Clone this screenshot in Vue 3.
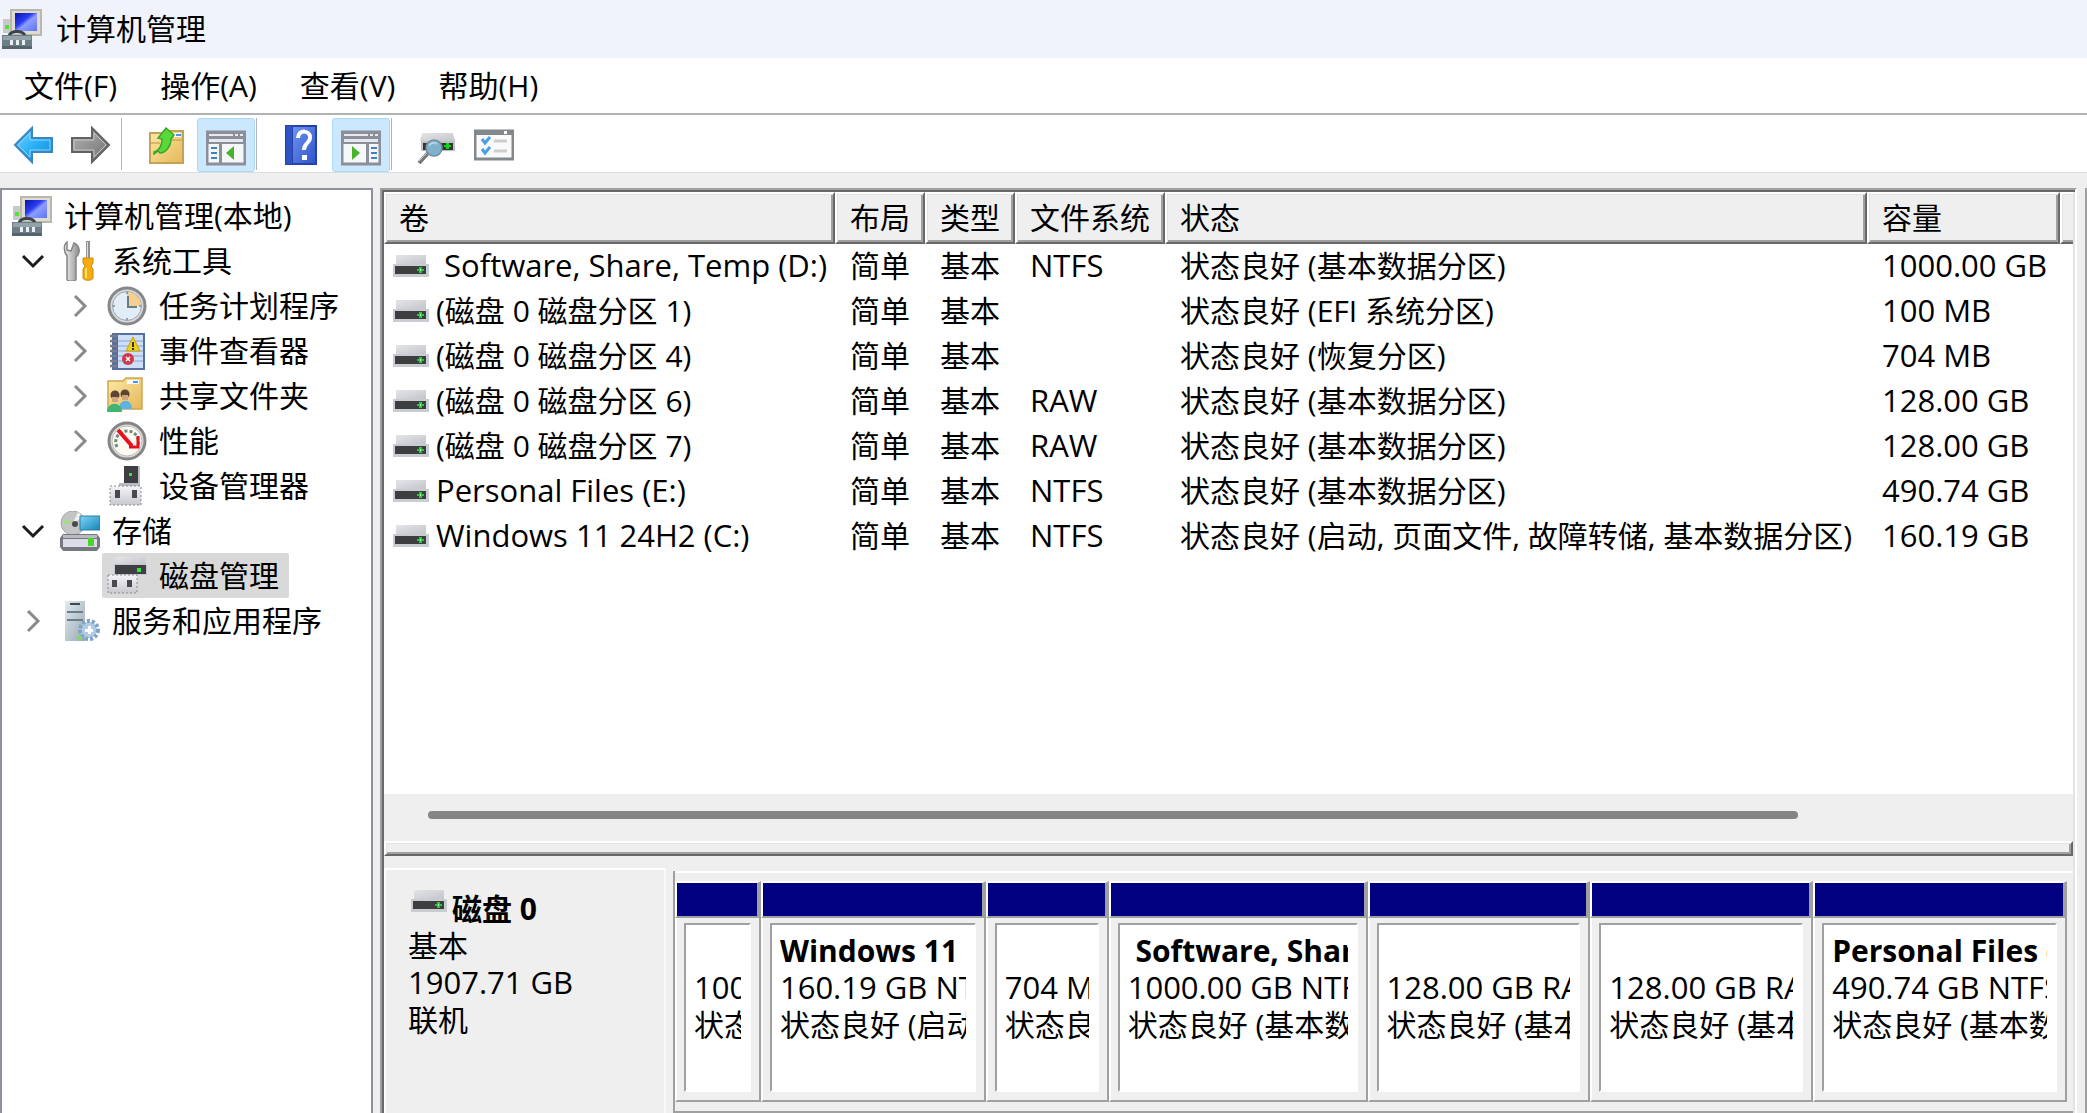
<script setup>
const menus = ['文件(F)', '操作(A)', '查看(V)', '帮助(H)']

const tools = [
  { icon: 'back', label: '后退' },
  { icon: 'forward', label: '前进', sep: true },
  { icon: 'folder-up', label: '上一级' },
  { icon: 'pane-left', label: '显示/隐藏控制台树', on: true, sep: true },
  { icon: 'help', label: '帮助' },
  { icon: 'pane-right', label: '显示/隐藏操作窗格', on: true, sep: true },
  { icon: 'rescan', label: '重新扫描磁盘' },
  { icon: 'list', label: '属性' },
]

const tree = [
  { level: 0, icon: 'computer', text: '计算机管理(本地)' },
  { level: 1, icon: 'tools', text: '系统工具', state: 'open' },
  { level: 2, icon: 'clock', text: '任务计划程序', state: 'closed' },
  { level: 2, icon: 'events', text: '事件查看器', state: 'closed' },
  { level: 2, icon: 'share', text: '共享文件夹', state: 'closed' },
  { level: 2, icon: 'gauge', text: '性能', state: 'closed' },
  { level: 2, icon: 'device', text: '设备管理器' },
  { level: 1, icon: 'storage', text: '存储', state: 'open' },
  { level: 2, icon: 'disk-mgmt', text: '磁盘管理', selected: true },
  { level: 1, icon: 'services', text: '服务和应用程序', state: 'closed' },
]

const columns = ['卷', '布局', '类型', '文件系统', '状态', '容量', '']

const volumes = [
  { name: '\u00a0Software, Share, Temp (D:)', latin: true, fs: 'NTFS', status: '状态良好 (基本数据分区)', size: '1000.00 GB' },
  { name: '(磁盘 0 磁盘分区 1)', fs: '', status: '状态良好 (EFI 系统分区)', size: '100 MB' },
  { name: '(磁盘 0 磁盘分区 4)', fs: '', status: '状态良好 (恢复分区)', size: '704 MB' },
  { name: '(磁盘 0 磁盘分区 6)', fs: 'RAW', status: '状态良好 (基本数据分区)', size: '128.00 GB' },
  { name: '(磁盘 0 磁盘分区 7)', fs: 'RAW', status: '状态良好 (基本数据分区)', size: '128.00 GB' },
  { name: 'Personal Files (E:)', latin: true, fs: 'NTFS', status: '状态良好 (基本数据分区)', size: '490.74 GB' },
  { name: 'Windows 11 24H2 (C:)', latin: true, fs: 'NTFS', status: '状态良好 (启动, 页面文件, 故障转储, 基本数据分区)', size: '160.19 GB' },
]

const partitions = [
  { share: 86, name: '', size: '100 MB', status: '状态良好' },
  { share: 225, name: 'Windows 11 24H2', size: '160.19 GB NTFS', status: '状态良好 (启动)' },
  { share: 123, name: '', size: '704 MB', status: '状态良好' },
  { share: 259, name: '\u00a0Software, Share', size: '1000.00 GB NTFS', status: '状态良好 (基本数据)' },
  { share: 223, name: '', size: '128.00 GB RAW', status: '状态良好 (基本)' },
  { share: 223, name: '', size: '128.00 GB RAW', status: '状态良好 (基本)' },
  { share: 254, name: 'Personal Files (E:)', size: '490.74 GB NTFS', status: '状态良好 (基本数据)' },
]
</script>

<template>
  <svg class="sprite" aria-hidden="true">
    <defs>
      <linearGradient id="g-screen" x1="0" y1="0" x2="1" y2="1">
        <stop offset="0" stop-color="#0a12a8" /><stop offset=".4" stop-color="#2a3ef0" />
        <stop offset=".55" stop-color="#8d9dff" /><stop offset="1" stop-color="#5c74f4" />
      </linearGradient>
      <linearGradient id="g-blue" x1="0" y1="0" x2="1" y2="1">
        <stop offset="0" stop-color="#7fd6fb" /><stop offset=".5" stop-color="#29b2f8" /><stop offset="1" stop-color="#1584d0" />
      </linearGradient>
      <linearGradient id="g-gray" x1="0" y1="0" x2="1" y2="1">
        <stop offset="0" stop-color="#b5b5b5" /><stop offset="1" stop-color="#6f6f6f" />
      </linearGradient>
      <linearGradient id="g-folder" x1="0" y1="0" x2="1" y2="1">
        <stop offset="0" stop-color="#ffe9a6" /><stop offset="1" stop-color="#e3b85a" />
      </linearGradient>
      <linearGradient id="g-help" x1="0" y1="0" x2="1" y2="1">
        <stop offset="0" stop-color="#6f93ee" /><stop offset="1" stop-color="#2f55cc" />
      </linearGradient>
      <linearGradient id="g-metal" x1="0" y1="0" x2="1" y2="0">
        <stop offset="0" stop-color="#f4f4f4" /><stop offset="1" stop-color="#8c8c8c" />
      </linearGradient>
      <linearGradient id="g-top" x1="0" y1="0" x2="1" y2="1">
        <stop offset="0" stop-color="#e4e5e8" /><stop offset="1" stop-color="#c3c5ca" />
      </linearGradient>
      <linearGradient id="g-box" x1="0" y1="0" x2="0" y2="1">
        <stop offset="0" stop-color="#f4f4f8" /><stop offset="1" stop-color="#c8c8d0" />
      </linearGradient>
      <linearGradient id="g-cyan" x1="0" y1="0" x2="1" y2="1">
        <stop offset="0" stop-color="#7fd6f5" /><stop offset="1" stop-color="#1583ba" />
      </linearGradient>
      <linearGradient id="g-tower" x1="0" y1="0" x2="1" y2="1">
        <stop offset="0" stop-color="#e3ecf1" /><stop offset="1" stop-color="#98a8b3" />
      </linearGradient>
    </defs>

    <symbol id="computer" viewBox="0 0 40 40">
      <path d="M1 10h8v14H1z" fill="#c7cbc8" /><path d="M3 16h4v4H3z" fill="#52e03a" />
      <path d="M8 0h32v27H8z" fill="#b9b7ae" /><path d="M10 2h28v23H10z" fill="#dedbd0" />
      <path d="M13 4h22v18H13z" fill="url(#g-screen)" />
      <path d="M7 27c2-6 14-6 16 0" fill="none" stroke="#3b444b" stroke-width="3" />
      <path d="M0 26h30v14H0z" fill="#6d7e87" /><path d="M1 27h28v4H1z" fill="#93a3ab" />
      <path d="M8 31h3v5H8zM14 31h3v5h-3zM20 31h3v5h-3z" fill="#e9eef0" />
      <path d="M0 37h30v3H0z" fill="#55646d" />
    </symbol>

    <symbol id="back" viewBox="0 0 40 40">
      <path d="M2 20 19 3v10h20v14H19v10z" fill="url(#g-blue)" stroke="#3a86c4" stroke-width="2" />
      <path d="M5 20 17 8v7h20v10H17v7z" fill="none" stroke="#8fd0f4" stroke-width="1" />
    </symbol>
    <symbol id="forward" viewBox="0 0 40 40">
      <path d="M38 20 21 3v10H1v14h20v10z" fill="url(#g-gray)" stroke="#636363" stroke-width="2" />
      <path d="M35 20 23 8v7H3v10h20v7z" fill="none" stroke="#c4c4c4" stroke-width="1" />
    </symbol>
    <symbol id="folder-up" viewBox="0 0 40 40">
      <path d="M4 8h15v-2h18v32H4z" fill="url(#g-folder)" stroke="#c4a257" stroke-width="2" />
      <path d="M28 8h7v4h-7z" fill="#fff" /><path d="M30 9h5v2h-5z" fill="#3d9be8" />
      <path d="M5 18h9M24 15h12" fill="none" stroke="#cda955" stroke-width="1.500" />
      <path d="M8 27c6-2 8-8 8-13l-4-1 8-10 8 7-3 4c0 8-6 14-11 14l-2-2-4 3z" fill="#58d83a" stroke="#3aa528" stroke-width="1.500" />
    </symbol>
    <symbol id="pane-left" viewBox="0 0 40 40">
      <path d="M1 5h38v32H1z" fill="#f6f7f9" stroke="#8b8f99" stroke-width="3" />
      <path d="M2 6h36v11H2z" fill="#8b8f99" /><path d="M3 7h24v2H3zM3 12h34v3H3z" fill="#e6e9ef" />
      <path d="M29 7h3v2h-3zM34 7h3v2h-3z" fill="#e6e9ef" />
      <path d="M13 17h3v19h-3z" fill="#8b8f99" />
      <path d="M5 20h6v2H5zM5 25h6v2H5zM5 30h6v2H5z" fill="#3f7fc8" />
      <path d="M28 19v14l-8-7z" fill="#45b52c" />
    </symbol>
    <symbol id="pane-right" viewBox="0 0 40 40">
      <path d="M1 5h38v32H1z" fill="#f6f7f9" stroke="#8b8f99" stroke-width="3" />
      <path d="M2 6h36v11H2z" fill="#8b8f99" /><path d="M3 7h24v2H3zM3 12h34v3H3z" fill="#e6e9ef" />
      <path d="M29 7h3v2h-3zM34 7h3v2h-3z" fill="#e6e9ef" />
      <path d="M25 17h3v19h-3z" fill="#8b8f99" />
      <path d="M30 20h6v2h-6zM30 25h6v2h-6zM30 30h6v2h-6z" fill="#3f7fc8" />
      <path d="M11 19v14l8-7z" fill="#45b52c" />
    </symbol>
    <symbol id="help" viewBox="0 0 40 40">
      <path d="M4 0h32v40H4z" fill="#2443a8" /><path d="M12 2h22v36H12z" fill="url(#g-help)" />
      <path d="M5 1h6v38H5z" fill="#2f53c4" />
      <path d="M17 13c0-9 13-8 12 0 0 5-6 5-6 12" fill="none" stroke="#fff" stroke-width="4" />
      <path d="M21 30h5v5h-5z" fill="#fff" />
    </symbol>
    <symbol id="rescan" viewBox="0 0 40 40">
      <path d="M6 8h31l2 8H4z" fill="url(#g-top)" /><path d="M5 16h34v10H5z" fill="#bfc3c8" />
      <path d="M7 18h30v7H7z" fill="#333" /><path d="M28 20h7v2h-7zM30 18h3v6h-3z" fill="#12d21a" />
      <path d="M13 27 3 38" stroke="#777" stroke-width="4" /><path d="M12 27 3 36" stroke="#c5c5c5" stroke-width="1" />
      <circle cx="18" cy="23" r="8" fill="#7fb1cc" stroke="#6f8c9f" stroke-width="1.500" />
      <path d="M13 21c2-4 6-4 8-2" fill="none" stroke="#b6d4e3" stroke-width="2" />
    </symbol>
    <symbol id="list" viewBox="0 0 40 40">
      <path d="M1 6h38v28H1z" fill="#fafafa" stroke="#83888c" stroke-width="3" /><path d="M1 5h38v5H1z" fill="#83888c" />
      <path d="M30 6h3v3h-3z" fill="#fff" />
      <path d="m8 14 3 4 5-6M8 24l3 4 5-6" fill="none" stroke="#4b9fe8" stroke-width="3" />
      <path d="M20 16h13M20 26h13" stroke="#cdcdcd" stroke-width="3" />
    </symbol>

    <symbol id="tools" viewBox="0 0 40 40">
      <path d="M7 1v8l4 1 3-8c6 3 7 10 2 14v22c0 3-9 3-9 0V15C4 11 3 4 7 1z" fill="url(#g-metal)" stroke="#858585" stroke-width="1.500" />
      <path d="M26 0h4v18h-4z" fill="#8f9193" /><path d="M27 1h1v17h-1z" fill="#ddd" />
      <path d="M23 17h10v5l-2 3 2 3v9c0 3-10 3-10 0v-9l2-3-2-3z" fill="#f7ac0c" stroke="#c58a15" />
      <path d="M26 27v10" stroke="#ffe07a" stroke-width="2" />
    </symbol>
    <symbol id="clock" viewBox="0 0 40 40">
      <circle cx="20" cy="20" r="18" fill="#d7dade" stroke="#858789" stroke-width="3" />
      <circle cx="20" cy="20" r="14.500" fill="#e3edf8" stroke="#9aa3ac" />
      <path d="M20 20V6a14 14 0 0 1 14 14z" fill="#f4d08c" />
      <path d="M21 10v11h9" fill="none" stroke="#6c7b88" stroke-width="2" />
      <path d="M20 6v2M20 32v2M6 20h2M32 20h2" stroke="#7a8a99" stroke-width="1.500" />
    </symbol>
    <symbol id="events" viewBox="0 0 40 40">
      <path d="M5 2h33v37H5z" fill="#556ea6" /><path d="M11 4h25v33H11z" fill="#cfdff5" />
      <path d="M11 10h25M11 15h25M11 20h25M11 25h25M11 30h25" stroke="#83a3d8" />
      <path d="M3 5h7M3 10h7M3 15h7M3 20h7M3 25h7M3 30h7M3 35h7" stroke="#7b7e86" stroke-width="2.500" />
      <path d="m26 6 7 14H19z" fill="#eed01f" stroke="#c8a400" /><path d="M25 11h2v5h-2zM25 17h2v2h-2z" fill="#3d3300" />
      <circle cx="21" cy="28" r="6" fill="#d2384c" /><path d="m19 26 4 4M23 26l-4 4" stroke="#fff" stroke-width="1.500" />
    </symbol>
    <symbol id="share" viewBox="0 0 40 40">
      <path d="M1 5h15l3-3h16v31H1z" fill="url(#g-folder)" stroke="#d0a850" stroke-width="1.500" />
      <path d="M20 4h12v4H20z" fill="#fff" /><path d="M26 5h5v2h-5z" fill="#3d9be8" />
      <circle cx="18" cy="18" r="4.500" fill="#5b4636" /><path d="M15 19h6v5h-6z" fill="#d3a480" /><path d="M12 33c0-11 13-11 13 0z" fill="#5fb2e4" />
      <circle cx="8" cy="19" r="4.500" fill="#5b4636" /><path d="M5 21h6v5H5z" fill="#d3a480" /><path d="M0 36c0-11 15-11 15 0z" fill="#3fb475" />
    </symbol>
    <symbol id="gauge" viewBox="0 0 40 40">
      <circle cx="20" cy="20" r="18" fill="#dcdcdc" stroke="#858585" stroke-width="3" />
      <circle cx="20" cy="20" r="15" fill="#fdfaf4" stroke="#c1bdb5" />
      <path d="M10 26c-4-8 2-16 10-16s13 7 11 14" fill="none" stroke="#6b8b7a" stroke-width="3" stroke-dasharray="3 2" />
      <path d="m11 9 14 16" stroke="#e8101c" stroke-width="4" /><path d="M31 15v11h-9" fill="none" stroke="#e8101c" stroke-width="3" />
    </symbol>
    <symbol id="device" viewBox="0 0 40 40">
      <path d="M17 0h14v19H17z" fill="#3e3f42" /><path d="M31 0h2v19h-2zM12 17h21v3H12z" fill="#b9bdc2" /><path d="M22 7h3v3h-3z" fill="#38e34a" />
      <path d="M3 20h31v19H3z" fill="url(#g-box)" stroke="#8a8a90" stroke-dasharray="2 2" />
      <path d="M8 24h5v8H8zM25 24h5v8h-5z" fill="#4a4a4e" />
    </symbol>
    <symbol id="storage" viewBox="0 0 40 40">
      <circle cx="13" cy="12" r="12" fill="#c3c5c6" stroke="#a5a5a5" /><path d="m13 12-8-4-2 5z" fill="#9be37f" />
      <path d="m13 12 5-11 5 5z" fill="#f1f1f1" /><circle cx="15" cy="13" r="3" fill="#4a4a4d" />
      <path d="M20 5h20v14H20z" fill="url(#g-cyan)" stroke="#2b7fa6" />
      <path d="M3 23h34l3 4v9l-3 4H3l-3-4v-9z" fill="#77777f" /><path d="M3 24h34v3H3z" fill="#b9bac2" /><path d="M3 28h34v8H3z" fill="#dcdce8" />
      <path d="M28 27h6v8h-6z" fill="#4bd52a" />
    </symbol>
    <symbol id="disk-mgmt" viewBox="0 0 40 40">
      <path d="M9 1h29l1 8H8z" fill="url(#g-top)" /><path d="M7 8h33v11H7z" fill="#c3c8ce" />
      <path d="M8 9h31v9H8z" fill="#3e3f42" /><path d="M30 12h4v4h-4z" fill="#38e34a" />
      <path d="M1 19h29v18H1z" fill="url(#g-box)" stroke="#8a8a90" stroke-dasharray="2 2" />
      <path d="M5 24h5v7H5zM20 24h5v7h-5z" fill="#4a4a4e" />
    </symbol>
    <symbol id="services" viewBox="0 0 40 40">
      <path d="M5 0h20v40H5z" fill="url(#g-tower)" /><path d="M10 2h10v2H10z" fill="#3e4a52" /><path d="M7 10h16v2H7zM7 18h16v2H7z" fill="#6e7d87" />
      <circle cx="29" cy="29" r="8" fill="#b3cce4" /><circle cx="29" cy="29" r="9" fill="none" stroke="#7ea3c8" stroke-width="4" stroke-dasharray="3 2" />
      <path d="M28 25h3v8h-3z" fill="#fff" /><path d="M25 28h8v3h-8z" fill="#fff" /><path d="M18 35h4v3h-4z" fill="#7be04a" />
    </symbol>
    <symbol id="drive" viewBox="0 0 36 22">
      <path d="M3 0h30v9H3z" fill="url(#g-top)" /><path d="M0 9h36v13H0z" fill="#c9ccd1" />
      <path d="M2 11h31v8H2z" fill="#3d3e40" /><path d="M24 14h7v2h-7z" fill="#28c735" /><path d="M26 12h3v6h-3z" fill="#28c735" /><path d="M27 14h1v2h-1z" fill="#a6ffad" />
    </symbol>
  </svg>

  <div class="window">
    <header class="title">
      <svg class="icon"><use href="#computer" /></svg>
      <h1>计算机管理</h1>
    </header>

    <nav class="menu">
      <button v-for="m in menus" :key="m" type="button">{{ m }}</button>
    </nav>

    <div class="toolbar">
      <template v-for="t in tools" :key="t.icon">
        <button type="button" :class="{ on: t.on }" :aria-label="t.label"><svg class="icon"><use :href="'#' + t.icon" /></svg></button>
        <i v-if="t.sep" class="sep"></i>
      </template>
    </div>

    <main class="body">
      <ul class="tree">
        <li v-for="n in tree" :key="n.text" :class="'level' + n.level">
          <button v-if="n.state" type="button" class="twist" :class="n.state" :aria-label="n.text">
            <svg viewBox="0 0 24 24"><path d="m7 2 10 10L7 22" /></svg>
          </button>
          <span v-else-if="n.level" class="twist"></span>
          <span class="node" :class="{ selected: n.selected }">
            <svg class="icon"><use :href="'#' + n.icon" /></svg>{{ n.text }}
          </span>
        </li>
      </ul>

      <section class="pane">
        <div class="list">
          <table>
            <colgroup>
              <col class="c-name"><col class="c-short"><col class="c-short"><col class="c-fs"><col class="c-status"><col class="c-size"><col>
            </colgroup>
            <thead>
              <tr><th v-for="c in columns" :key="c">{{ c }}</th></tr>
            </thead>
            <tbody>
              <tr v-for="v in volumes" :key="v.name">
                <td>
                  <span class="volume" :class="{ latin: v.latin }"><svg class="drive"><use href="#drive" /></svg>{{ v.name }}</span>
                </td>
                <td>简单</td>
                <td>基本</td>
                <td class="latin">{{ v.fs }}</td>
                <td>{{ v.status }}</td>
                <td class="latin">{{ v.size }}</td>
                <td></td>
              </tr>
            </tbody>
          </table>
        </div>

        <div class="scroll"><div class="thumb"></div></div>
        <div class="splitter"></div>

        <div class="disks">
          <div class="disk">
            <h2><svg class="drive"><use href="#drive" /></svg>磁盘 0</h2>
            <p>基本</p>
            <p class="latin">1907.71 GB</p>
            <p>联机</p>
          </div>
          <div class="map">
            <div class="parts">
              <div v-for="(p, i) in partitions" :key="i" class="part" :style="{ flexGrow: p.share }">
                <div class="bar"></div>
                <div class="cell">
                  <div class="box">
                    <strong>{{ p.name }}</strong>
                    <p class="latin">{{ p.size }}</p>
                    <p>{{ p.status }}</p>
                  </div>
                </div>
              </div>
            </div>
          </div>
        </div>
      </section>
      <div class="edge"></div>
    </main>
  </div>
</template>

<style>
body {
  margin: 0;
  background: #efefef;
}
</style>

<style scoped>
.sprite {
  position: absolute;
  width: 0;
  height: 0;
}
.window {
  display: flex;
  flex-direction: column;
  min-height: 100vh;
  overflow: hidden;
  background: #efefef;
  color: #000;
  font: 30px/45px "Open Sans", "Noto Sans CJK SC", sans-serif;
}
button {
  padding: 0;
  border: 0;
  background: none;
  color: inherit;
  font: inherit;
}
h1, h2, p, ul {
  margin: 0;
  padding: 0;
  font: inherit;
}
.icon {
  display: block;
  flex: none;
  width: 40px;
  height: 40px;
}
.drive {
  display: block;
  flex: none;
  width: 36px;
  height: 22px;
}
.latin {
  font-size: 31px;
}

.title {
  display: flex;
  align-items: center;
  gap: 14px;
  height: 58px;
  padding-left: 2px;
  background: #f0f3fb;
}
.title h1 {
  padding-bottom: 2px;
}
.menu {
  display: flex;
  gap: 43px;
  height: 55px;
  padding-left: 24px;
  align-items: center;
  border-bottom: 2px solid #b0b3b4;
  background: #fff;
}
.toolbar {
  display: flex;
  height: 54px;
  padding: 3px 0 0 4px;
  border-bottom: 1px solid #dcdcdc;
  background: #fff;
}
.toolbar button {
  box-sizing: border-box;
  width: 58px;
  height: 54px;
  padding: 6px 8px;
  border: 1px solid transparent;
}
.toolbar button.on {
  margin-left: 2px;
  padding-top: 8px;
  border-color: #a8d8fb;
  border-radius: 3px;
  background: #cce8ff;
}
.sep {
  width: 1px;
  height: 52px;
  margin: 0 15px 0 1px;
  background: #b4b4b4;
}

.body {
  display: flex;
  flex: 1;
  padding-top: 15px;
}
.tree {
  box-sizing: border-box;
  flex: none;
  width: 373px;
  padding-top: 3px;
  border: 2px solid #8c919b;
  border-bottom: 0;
  background: #fff;
  list-style: none;
}
.tree li {
  display: flex;
  height: 45px;
}
.level0 {
  padding-left: 5px;
}
.level1 {
  padding-left: 8px;
}
.level2 {
  padding-left: 55px;
}
.twist {
  display: flex;
  align-items: center;
  justify-content: center;
  width: 45px;
}
.twist svg {
  width: 24px;
  height: 24px;
  fill: none;
  stroke: #8a8a8a;
  stroke-width: 3;
}
.twist.open svg {
  stroke: #1c1c1c;
  transform: rotate(90deg);
}
.node {
  display: flex;
  align-items: center;
  gap: 12px;
  padding: 0 10px 0 5px;
  white-space: nowrap;
}
.node.selected {
  border-radius: 2px;
  background: #d9d9d9;
}

.pane {
  display: flex;
  flex: 1;
  flex-direction: column;
  min-width: 0;
  margin: 0 8px 0 7px;
  border: 2px solid;
  border-color: #a0a0a0 #fff #a0a0a0 #a0a0a0;
  border-bottom: 0;
  box-shadow: inset 2px 2px #696969, inset -2px 0 #e3e3e3;
  padding: 2px 2px 0;
}
.edge {
  width: 2px;
  background: #a0a0a0;
}
.list {
  flex: 1;
  overflow: hidden;
  background: #fff;
}
table {
  width: 100%;
  border-collapse: separate;
  border-spacing: 0;
  table-layout: fixed;
}
.c-name {
  width: 451px;
}
.c-short {
  width: 90px;
}
.c-fs {
  width: 150px;
}
.c-status {
  width: 702px;
}
.c-size {
  width: 193px;
}
th {
  box-sizing: border-box;
  height: 52px;
  padding: 0 0 0 13px;
  border: 2px solid;
  border-color: #fff #696969 #696969 #fff;
  background: #efefef;
  box-shadow: inset 1px 1px #e3e3e3, inset -2px -2px #a0a0a0;
  font-weight: 400;
  line-height: 40px;
  text-align: left;
  white-space: nowrap;
}
th:last-child {
  border-right: 0;
  box-shadow: inset 1px 1px #e3e3e3, inset 0 -2px #a0a0a0;
}
td {
  height: 43px;
  padding: 0 0 2px 15px;
  line-height: 43px;
  white-space: nowrap;
}
td:first-child {
  padding-left: 9px;
}
.volume {
  display: flex;
  align-items: center;
  gap: 7px;
  height: 43px;
}

.scroll {
  display: flex;
  align-items: center;
  height: 47px;
  padding: 0 52px 0 44px;
}
.thumb {
  width: 86%;
  height: 8px;
  margin-bottom: 6px;
  border-radius: 4px;
  background: #858585;
}
.splitter {
  height: 11px;
  border: 2px solid;
  border-color: #fff #696969 #696969 #fff;
  box-shadow: inset 1px 1px #e3e3e3, inset -2px -2px #a0a0a0;
}
.disks {
  display: flex;
  height: 245px;
  padding-top: 12px;
}
.disk {
  box-sizing: border-box;
  width: 282px;
  padding: 20px 0 0 22px;
  border: 2px solid #fff;
  border-right-color: #f8f8f8;
  border-bottom: 0;
  line-height: 37px;
}
.disk h2 {
  display: flex;
  gap: 5px;
  padding-left: 3px;
  font-weight: 700;
}
.map {
  flex: 1;
  min-width: 0;
  margin: 3px 0 0 7px;
  padding: 10px 6px 9px 0;
  border: solid #a0a0a0;
  border-width: 0 0 2px 2px;
  box-shadow: inset 0 2px #fff;
}
.parts {
  display: flex;
  height: 100%;
}
.part {
  display: flex;
  flex: 1 1 0;
  flex-direction: column;
  min-width: 0;
}
.bar {
  height: 33px;
  border: solid;
  border-width: 2px 4px 2px 2px;
  border-color: #fff #a0a0a0 #a0a0a0 #fff;
  background: #000080;
}
.cell {
  display: flex;
  flex: 1;
  min-width: 0;
  padding: 5px 8px 8px 7px;
  border: solid;
  border-width: 0 2px 2px 2px;
  border-color: #a0a0a0 #a0a0a0 #a0a0a0 #fff;
}
.box {
  flex: 1;
  min-width: 0;
  padding: 7px 8px 0 8px;
  border: 2px solid;
  border-color: #a0a0a0 #fff #fff #a0a0a0;
  background: #fff;
  line-height: 37px;
  white-space: nowrap;
}
.box strong,
.box p {
  display: block;
  height: 37px;
  overflow: hidden;
}
</style>
